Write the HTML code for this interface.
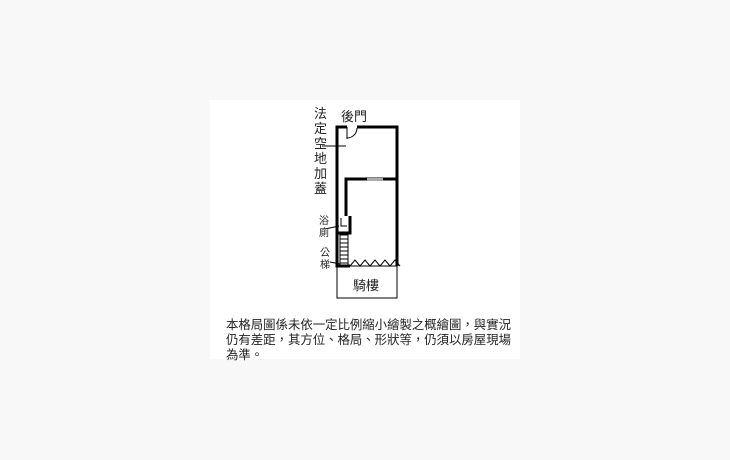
<!DOCTYPE html>
<html><head><meta charset="utf-8"><style>
body{margin:0;width:730px;height:460px;background:#f8f8f8;position:relative;overflow:hidden;font-family:"Liberation Sans","Noto Sans CJK TC",sans-serif;}
.card{position:absolute;left:210px;top:100px;width:310px;height:259px;background:#fff;}
.t{position:absolute;color:#222;white-space:nowrap;}
p{position:absolute;left:226px;top:318px;margin:0;width:300px;font-size:12.4px;line-height:15px;color:#222;}
</style></head><body>
<div class="card"></div>
<svg style="position:absolute;left:0;top:0" width="730" height="460">
<g fill="none" stroke="#000" stroke-width="3">
<polyline points="347,127 337,127 337,266 350,266"/>
<polyline points="357,127 397,127 397,266"/>
<polyline points="346,216 346,179 397,179"/>
<polyline points="350,216 350,233 337,233"/>
</g>
<g stroke="#000" stroke-width="1" fill="none">
<path d="M347,127 v12 M357,128 a10,10 0 0 1 -10,10"/>
<line x1="322" y1="146" x2="346" y2="146"/>
<rect x="337" y="266" width="60" height="32"/>
<rect x="340" y="235" width="8" height="31"/>
<path d="M340,239h8M340,243h8M340,247h8M340,251h8M340,255h8M340,259h8M340,263h8"/>
<path d="M350,266 l5,-6 l5,6 l5,-6 l5,6 l5,-6 l5,6 l5,-6 l5,6 l5,-6 l5,6"/>
<path d="M341,218 v8 h6 M325,229 l14,-3"/>
<line x1="330" y1="262" x2="340" y2="264"/>
</g>
<rect x="367" y="178" width="16" height="3" fill="#aaa"/>
</svg>
<div class="t" style="left:341px;top:106px;font-size:13px">後門</div>
<div class="t" style="left:314px;top:106px;font-size:13px;line-height:15px;width:14px;white-space:normal">法定空地加蓋</div>
<div class="t" style="left:319px;top:216px;font-size:10px;line-height:12px;width:11px;white-space:normal">浴廁</div>
<div class="t" style="left:320px;top:248px;font-size:10px;line-height:12px;width:11px;white-space:normal">公梯</div>
<div class="t" style="left:353px;top:275px;font-size:13px">騎樓</div>
<p>本格局圖係未依一定比例縮小繪製之概繪圖，與實況<br>仍有差距，其方位、格局、形狀等，仍須以房屋現場<br>為準。</p>
</body></html>
